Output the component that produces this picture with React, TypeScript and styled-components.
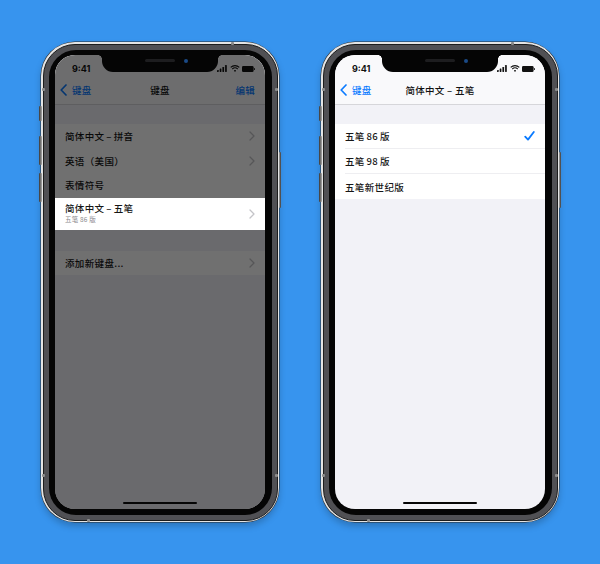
import React from "react";
import styled, { createGlobalStyle } from "styled-components";

const Global = createGlobalStyle`
  html, body { margin: 0; padding: 0; background: #3794ee; }
  body { width: 600px; height: 564px; overflow: hidden; font-family: "Noto Sans CJK SC", "Liberation Sans", sans-serif; }
`;

const Page = styled.main`
  width: 600px; height: 564px; box-sizing: border-box;
  background: #3794ee;
  display: flex; justify-content: center; gap: 42px;
  padding-top: 42px;
`;

const Phone = styled.div`
  position: relative; width: 238px; height: 480px; box-sizing: border-box;
  border-radius: 34px;
  padding: 1.5px;
  background: #e4e4e4;
  box-shadow: 0 0 0 .5px #2a2a2a, 0 4px 7px rgba(0,0,0,.22);
`;
const Band = styled.div`
  height: 100%; box-sizing: border-box; padding: 5px;
  border-radius: 32px;
  background: #505054;
  border: .5px solid #1c1c1c;
`;
const Bezel = styled.div`
  height: 100%; box-sizing: border-box; padding: 5.5px 6.5px;
  border-radius: 27px;
  background: #050505;
`;

const SideButton = styled.span<{ $side: "left" | "right"; $top: number; $height: number }>`
  position: absolute; top: ${p => p.$top}px; ${p => p.$side}: -2px;
  width: 2.5px; height: ${p => p.$height}px;
  background: linear-gradient(${p => (p.$side === "left" ? "90deg, #333, #aaa" : "90deg, #aaa, #333")});
  border-radius: 1px;
`;
const Tick = styled.span<{ $x: number; $y: number }>`
  position: absolute; left: ${p => p.$x}px; top: ${p => p.$y}px;
  width: 3px; height: 3px; background: #8c8c8c; border-radius: 1px;
`;

const Screen = styled.div`
  position: relative; height: 100%; overflow: hidden;
  border-radius: 20px;
  background: #f2f2f7;
  display: flex; flex-direction: column;
  color: #111;
`;
const Dim = styled.div`
  position: absolute; inset: 0; z-index: 2;
  background: rgba(0,0,0,.56);
`;
const Notch = styled.div`
  position: absolute; z-index: 4; top: 0; left: 47px;
  width: 116px; height: 17px; box-sizing: border-box;
  background: #050505;
  border-radius: 0 0 11px 11px;
  &::before, &::after {
    content: ""; position: absolute; top: 0; width: 4px; height: 4px;
  }
  &::before { left: -4px; background: radial-gradient(circle at 0 100%, transparent 3.6px, #050505 4px); }
  &::after { right: -4px; background: radial-gradient(circle at 100% 100%, transparent 3.6px, #050505 4px); }
`;
const Speaker = styled.span`
  position: absolute; left: 43px; top: 4px; width: 30px; height: 2.5px;
  border-radius: 2px; background: #1d1d1f;
`;
const Camera = styled.span`
  position: absolute; left: 82px; top: 3.5px; width: 4px; height: 4px;
  border-radius: 50%; background: #1b4a86;
`;

const Header = styled.header`
  background: #f9f9fb;
  height: 49.5px; flex: none;
  display: flex; flex-direction: column;
  border-bottom: .5px solid #d6d6da;
  box-sizing: border-box;
`;
const StatusBar = styled.div`
  height: 27px; box-sizing: border-box; padding: 0 10px 0 17px;
  display: flex; align-items: center; justify-content: space-between;
`;
const Time = styled.span`
  font: 700 9px/1 "Inter", "Liberation Sans", sans-serif;
  color: #111;
`;
const StatusIcons = styled.span`
  display: flex; align-items: center; gap: 2.5px; color: #111;
`;
const NavBar = styled.nav`
  flex: 1; position: relative; padding: 0 10px 5px 5px;
  display: flex; align-items: center; justify-content: space-between;
  font-size: 9.5px; font-weight: 500;
`;
const NavLink = styled.span`
  display: flex; align-items: center; gap: 5px; color: #0a7aff; letter-spacing: .2px;
`;
const NavTitle = styled.span`
  position: absolute; left: 0; right: 0; text-align: center;
  font-weight: 500; letter-spacing: .3px; color: #111; pointer-events: none;
`;

const Group = styled.section<{ $top: number }>`
  margin-top: ${p => p.$top}px;
  background: #fff;
  display: flex; flex-direction: column;
`;
const Row = styled.div<{ $height?: number; $lifted?: boolean; $divider?: boolean }>`
  position: relative; ${p => (p.$lifted ? "z-index: 3;" : "")}
  height: ${p => p.$height ?? 24.5}px; box-sizing: border-box; flex: none;
  background: #fff;
  margin-left: ${p => (p.$divider ? 10 : 0)}px;
  padding: 0 10px 0 ${p => (p.$divider ? 0 : 10)}px;
  display: flex; align-items: center; justify-content: space-between;
  ${p => (p.$divider ? "border-bottom: .5px solid #eeeef1;" : "")}
`;
const RowText = styled.span`
  display: flex; flex-direction: column; gap: 1px; padding-bottom: 3px;
`;
const Label = styled.span`
  font-size: 9.5px; line-height: 12px; font-weight: 500; letter-spacing: .35px;
  word-spacing: -.6px; color: #161616; white-space: pre;
`;
const Sub = styled.span`
  font-size: 6.5px; line-height: 8px; color: #8a8a8e; letter-spacing: .2px;
`;
const HomeBar = styled.div`
  position: absolute; z-index: 4; left: 68px; bottom: 5px;
  width: 74px; height: 2.5px; border-radius: 2px; background: #050505;
`;

const Chevron = () => (
  <svg width="6" height="10" viewBox="0 0 6 10" fill="none">
    <path d="M1 1l4 4-4 4" stroke="#c4c4c8" strokeWidth="1.3" strokeLinecap="round" strokeLinejoin="round" />
  </svg>
);
const BackChevron = () => (
  <svg width="7" height="12" viewBox="0 0 7 12" fill="none">
    <path d="M6 1L1.2 6 6 11" stroke="#0a7aff" strokeWidth="1.7" strokeLinecap="round" strokeLinejoin="round" />
  </svg>
);
const Check = () => (
  <svg width="11" height="10" viewBox="0 0 11 10" fill="none">
    <path d="M1.2 5.6L4 8.6 9.8 1" stroke="#0a7aff" strokeWidth="1.8" strokeLinecap="round" strokeLinejoin="round" />
  </svg>
);
const Signal = () => (
  <svg width="10" height="7" viewBox="0 0 10 7" fill="currentColor">
    <rect x="0" y="5" width="1.7" height="2" rx=".4" />
    <rect x="2.7" y="3.6" width="1.7" height="3.4" rx=".4" />
    <rect x="5.4" y="2" width="1.7" height="5" rx=".4" />
    <rect x="8.1" y="0" width="1.7" height="7" rx=".4" />
  </svg>
);
const Wifi = () => (
  <svg width="10" height="7" viewBox="0 0 10 7" fill="none" stroke="currentColor" strokeWidth="1.1">
    <path d="M.7 2.4a6.2 6.2 0 0 1 8.6 0" />
    <path d="M2.3 4a3.9 3.9 0 0 1 5.4 0" />
    <path d="M5 6.9L3.8 5.5a1.8 1.8 0 0 1 2.4 0z" fill="currentColor" stroke="none" />
  </svg>
);
const Battery = () => (
  <svg width="13" height="6" viewBox="0 0 13 6" fill="currentColor">
    <rect x="0" y="0" width="11.6" height="6" rx="1.3" />
    <rect x="12" y="2" width="1" height="2" rx=".4" />
  </svg>
);

const Device: React.FC<{ children: React.ReactNode }> = ({ children }) => (
  <Phone>
    <SideButton $side="left" $top={64} $height={15} />
    <SideButton $side="left" $top={94} $height={29} />
    <SideButton $side="left" $top={131} $height={29} />
    <SideButton $side="right" $top={110} $height={56} />
    <Tick $x={1} $y={46} /><Tick $x={234} $y={46} />
    <Tick $x={1} $y={432} /><Tick $x={234} $y={432} />
    <Tick $x={190} $y={0} /><Tick $x={46} $y={477} />
    <Band><Bezel><Screen>
      {children}
      <Notch><Speaker /><Camera /></Notch>
      <HomeBar />
    </Screen></Bezel></Band>
  </Phone>
);

const Top: React.FC<{ title: string; right?: string }> = ({ title, right }) => (
  <Header>
    <StatusBar>
      <Time>9:41</Time>
      <StatusIcons><Signal /><Wifi /><Battery /></StatusIcons>
    </StatusBar>
    <NavBar>
      <NavLink><BackChevron />键盘</NavLink>
      <NavTitle>{title}</NavTitle>
      {right && <NavLink>{right}</NavLink>}
    </NavBar>
  </Header>
);

const plain = ["简体中文 – 拼音", "英语（美国）", "表情符号"];
const chevrons = [true, true, false];
const versions = ["五笔 86 版", "五笔 98 版", "五笔新世纪版"];

export default function App() {
  return (
    <>
      <Global />
      <Page>
        <Device>
          <Dim />
          <Top title="键盘" right="编辑" />
          <Group $top={19.5}>
            {plain.map((t, i) => (
              <Row key={t}><Label>{t}</Label>{chevrons[i] && <Chevron />}</Row>
            ))}
            <Row $height={32} $lifted>
              <RowText><Label>简体中文 – 五笔</Label><Sub>五笔 86 版</Sub></RowText>
              <Chevron />
            </Row>
          </Group>
          <Group $top={21}>
            <Row><Label>添加新键盘...</Label><Chevron /></Row>
          </Group>
        </Device>
        <Device>
          <Top title="简体中文 – 五笔" />
          <Group $top={19.5}>
            {versions.map((t, i) => (
              <Row key={t} $height={25} $divider={i < 2}>
                <Label>{t}</Label>{i === 0 && <Check />}
              </Row>
            ))}
          </Group>
        </Device>
      </Page>
    </>
  );
}
